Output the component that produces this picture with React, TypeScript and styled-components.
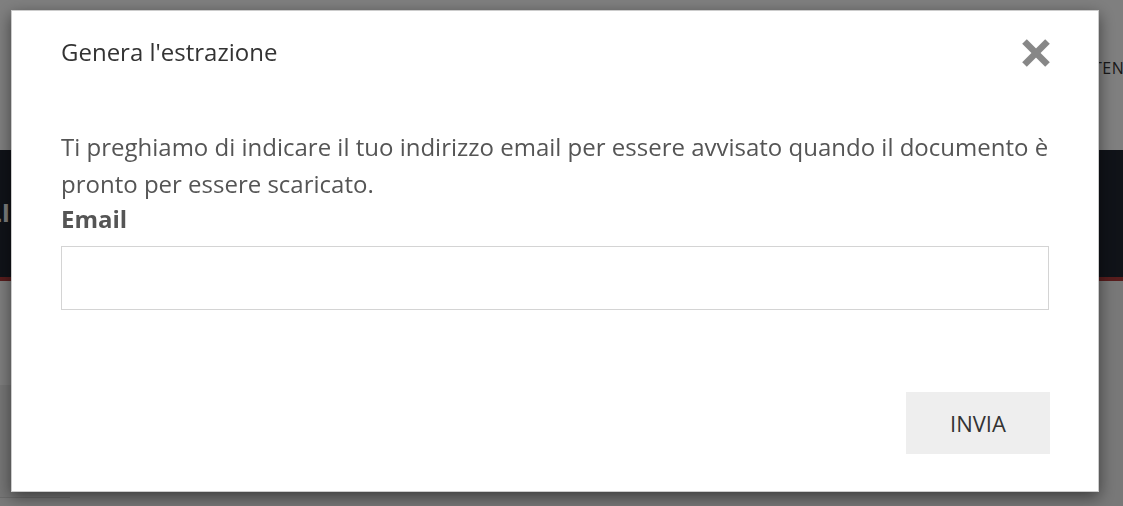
import React from "react";
import styled, { createGlobalStyle } from "styled-components";

const GlobalStyle = createGlobalStyle`
  html, body {
    margin: 0;
    padding: 0;
    width: 1123px;
    height: 506px;
    overflow: hidden;
    font-family: "Open Sans", "Noto Sans", sans-serif;
  }
  * { box-sizing: border-box; }
`;

const Page = styled.div`
  width: 1123px;
  height: 506px;
  display: flex;
  flex-direction: column;
  background: #f0f0f0;
  overflow: hidden;
`;

const Header = styled.header`
  height: 150px;
  background: #ffffff;
  display: flex;
  align-items: center;
  padding: 0 0 14px 1093px;
  white-space: nowrap;
  overflow: hidden;
`;

const NavItem = styled.span`
  font-size: 16px;
  color: #333;
  letter-spacing: 0.5px;
`;

const Hero = styled.div`
  height: 127px;
  background: #202631;
  display: flex;
  align-items: center;
  white-space: nowrap;
  overflow: hidden;
`;

const HeroEdge = styled.div`
  width: 10px;
  display: flex;
  justify-content: flex-end;
  margin-top: -4px;
`;

const HeroTitle = styled.h1`
  margin: 0;
  flex-shrink: 0;
  font-size: 25px;
  font-weight: 700;
  color: #ffffff;
`;

const RedLine = styled.div`
  height: 4px;
  background: #b03a3a;
`;

const Content = styled.div`
  flex: 1;
  display: flex;
`;

const SideStrip = styled.div`
  width: 70px;
  display: flex;
  flex-direction: column;
`;

const SideBlock = styled.div<{ $h: number; $bg: string }>`
  height: ${(p) => p.$h}px;
  background: ${(p) => p.$bg};
`;

const SideRule = styled.div`
  height: 1px;
  background: #d6d6d6;
`;

const Backdrop = styled.div`
  position: fixed;
  inset: 0;
  background: rgba(0, 0, 0, 0.5);
  display: flex;
  align-items: flex-start;
`;

const Modal = styled.div`
  margin: 10px 0 0 11px;
  width: 1088px;
  height: 482px;
  background: #fff;
  border: 1px solid rgba(0, 0, 0, 0.2);
  box-shadow: 0 5px 15px rgba(0, 0, 0, 0.5);
  display: flex;
  flex-direction: column;
  padding: 0 49px 0 49px;
`;

const ModalHeader = styled.div`
  display: flex;
  justify-content: space-between;
  align-items: flex-start;
  padding-top: 27px;
`;

const Title = styled.h4`
  margin: 0;
  font-size: 24px;
  line-height: 28px;
  font-weight: 400;
  color: #333;
`;

const CloseButton = styled.button`
  margin: 0 -2px 0 0;
  padding: 0;
  border: 0;
  background: transparent;
  width: 30px;
  height: 30px;
  display: flex;
  align-items: center;
  justify-content: center;
  cursor: pointer;
`;

const Message = styled.p`
  margin: 60px 0 0 0;
  font-size: 24px;
  line-height: 37px;
  color: #555;
`;

const Label = styled.label`
  display: block;
  margin-top: 3px;
  font-size: 24px;
  line-height: 28px;
  font-weight: 700;
  color: #555;
`;

const Input = styled.input`
  display: block;
  margin-top: 13px;
  width: 100%;
  height: 64px;
  border: 1px solid #d4d4d4;
  border-radius: 0;
  outline: none;
  padding: 0 16px;
  font-family: inherit;
  font-size: 24px;
  color: #555;
`;

const Footer = styled.div`
  display: flex;
  justify-content: flex-end;
  margin-top: 82px;
`;

const SubmitButton = styled.button`
  width: 144px;
  height: 62px;
  margin-right: -1px;
  border: 0;
  background: #eeeeee;
  font-family: inherit;
  font-size: 22px;
  color: #333;
  cursor: pointer;
`;

const CloseIcon = () => (
  <svg width="30" height="30" viewBox="0 0 30 30" aria-hidden="true">
    <g stroke="#878787" strokeWidth="6.5" strokeLinecap="butt">
      <line x1="3.5" y1="3.5" x2="26.5" y2="26.5" />
      <line x1="26.5" y1="3.5" x2="3.5" y2="26.5" />
    </g>
  </svg>
);

export default function App() {
  return (
    <>
      <GlobalStyle />
      <Page>
        <Header>
          <NavItem>TENDER</NavItem>
        </Header>
        <Hero>
          <HeroEdge>
            <HeroTitle>MODULI</HeroTitle>
          </HeroEdge>
        </Hero>
        <RedLine />
        <Content>
          <SideStrip>
            <SideBlock $h={104} $bg="#fcfcfc" />
            <SideBlock $h={112} $bg="#ececec" />
            <SideRule />
            <SideBlock $h={8} $bg="#f4f4f4" />
          </SideStrip>
        </Content>
      </Page>
      <Backdrop>
        <Modal role="dialog" aria-labelledby="modal-title">
          <ModalHeader>
            <Title id="modal-title">Genera l'estrazione</Title>
            <CloseButton aria-label="Chiudi">
              <CloseIcon />
            </CloseButton>
          </ModalHeader>
          <Message>
            Ti preghiamo di indicare il tuo indirizzo email per essere avvisato quando il documento è
            pronto per essere scaricato.
          </Message>
          <Label htmlFor="email">Email</Label>
          <Input id="email" type="email" />
          <Footer>
            <SubmitButton>INVIA</SubmitButton>
          </Footer>
        </Modal>
      </Backdrop>
    </>
  );
}
